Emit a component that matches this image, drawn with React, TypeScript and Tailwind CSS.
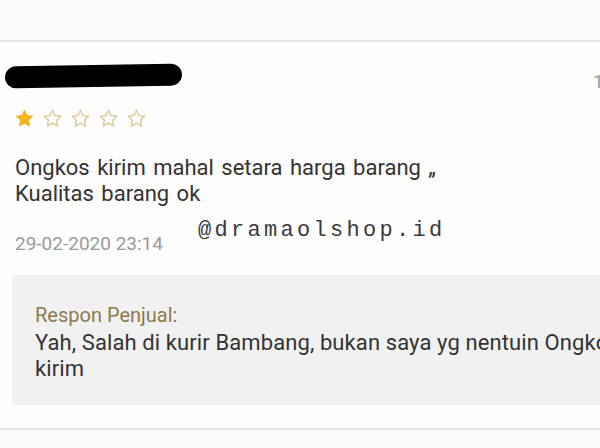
import React from 'react';

const Star = ({ filled }: { filled: boolean }) => (
  <svg width="21" height="21" viewBox="0 0 24 24" className="shrink-0">
    <path
      d="M12 2.5l2.9 6.1 6.6.8-4.9 4.6 1.3 6.6L12 17.3l-5.9 3.3 1.3-6.6-4.9-4.6 6.6-.8z"
      fill={filled ? '#f2b51d' : 'none'}
      stroke={filled ? '#f2b51d' : '#dccb98'}
      strokeWidth={filled ? 1 : 1.6}
      strokeLinejoin="round"
    />
  </svg>
);

const App: React.FC = () => {
  return (
    <div className="w-[600px] h-[448px] overflow-hidden bg-[#f9f9f9] font-['Roboto',sans-serif]">
      <div className="h-[42px] bg-[#f9f9f9] border-b-2 border-[#e4e4e4]" />
      <div className="w-[720px] bg-[#fdfdfd] pl-[12px] border-b-2 border-[#e6e6e6]">
        <div className="flex items-start pt-[23px]">
          <div className="-ml-[7px] w-[177px] h-[22px] rounded-full bg-black -rotate-[1deg] shrink-0" />
          <span className="ml-[411px] mt-[6px] shrink-0 whitespace-nowrap text-[19px] leading-[22px] text-[#999]">
            10-03-2020
          </span>
        </div>
        <div className="flex gap-[7px] pl-[2px] mt-[15px]">
          <Star filled />
          <Star filled={false} />
          <Star filled={false} />
          <Star filled={false} />
          <Star filled={false} />
        </div>
        <p className="pl-[3px] mt-[26px] text-[22px] leading-[26px] text-[#333] [word-spacing:2px]">
          Ongkos kirim mahal setara harga barang „<br />
          Kualitas barang ok
        </p>
        <div className="flex items-end pl-[3px] mt-[13px]">
          <span className="text-[19px] leading-[22px] text-[#9a9a9a]">29-02-2020 23:14</span>
          <span className="ml-[35px] mb-[13px] font-['Liberation_Mono',monospace] text-[22px] leading-[22px] tracking-[3.3px] text-[#3a3a3a]">
            @dramaolshop.id
          </span>
        </div>
        <div className="mt-[20px] mb-[23px] bg-[#f1f1f1] pl-[23px] pt-[25px] pb-[23px]">
          <div className="text-[20px] leading-[30px] text-[#8b7a4c]">Respon Penjual:</div>
          <div className="text-[22px] leading-[26px] text-[#333] w-[620px] tracking-[0.1px]">
            Yah, Salah di kurir Bambang, bukan saya yg nentuin Ongkos kirim
          </div>
        </div>
      </div>
    </div>
  );
};

export default App;
